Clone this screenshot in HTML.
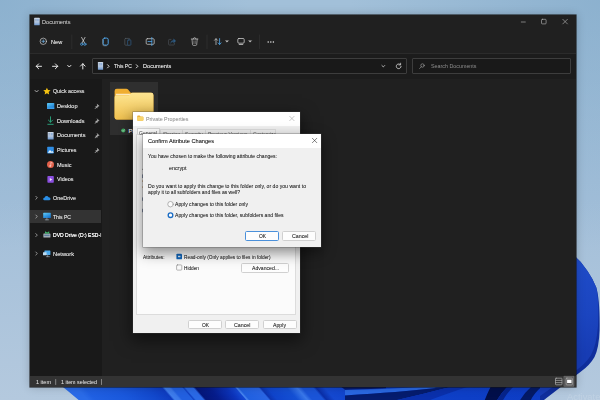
<!DOCTYPE html>
<html lang="en"><head><meta charset="utf-8"><title>Documents</title>
<style>
html,body{margin:0;padding:0;}
body{width:600px;height:400px;overflow:hidden;position:relative;font-family:"Liberation Sans",sans-serif;
background:#a9c4dc;}
.abs{position:absolute;}
.t{position:absolute;transform-origin:0 50%;text-shadow:0 0 .35px currentColor;white-space:nowrap;line-height:10px;height:10px;font-family:"Liberation Sans",sans-serif;}
#tx{position:absolute;left:0;top:0;width:600px;height:400px;will-change:transform;}
svg{position:absolute;left:0;top:0;overflow:visible;}
.win{position:absolute;left:29.6px;top:15.2px;width:546.2px;height:371.4px;background:#202020;box-shadow:0 0 0 .6px rgba(20,20,20,.85),0 0 9px rgba(0,0,0,.22);}
.btn{position:absolute;background:#fdfdfd;border:.5px solid #d0d0d0;border-radius:1.6px;box-sizing:border-box;}
#all{position:absolute;left:0;top:0;width:600px;height:400px;overflow:hidden;filter:blur(.32px);}

</style></head>
<body>
<div id="all">
<!-- wallpaper -->
<svg width="600" height="400" viewBox="0 0 600 400">
  <defs>
    <linearGradient id="wg" x1="0" y1="0" x2="0" y2="1">
      <stop offset="0" stop-color="#a2c0d9"/>
      <stop offset=".5" stop-color="#a3bfd9"/>
      <stop offset="1" stop-color="#b4c9de"/>
    </linearGradient>
    <radialGradient id="cnr" gradientUnits="userSpaceOnUse" cx="0" cy="0" r="250">
      <stop offset="0" stop-color="#73a0c3" stop-opacity=".46"/>
      <stop offset="1" stop-color="#73a0c3" stop-opacity="0"/>
    </radialGradient>
    <radialGradient id="cnr2" gradientUnits="userSpaceOnUse" cx="600" cy="0" r="250">
      <stop offset="0" stop-color="#73a0c3" stop-opacity=".46"/>
      <stop offset="1" stop-color="#73a0c3" stop-opacity="0"/>
    </radialGradient>
    <linearGradient id="bl1" gradientUnits="userSpaceOnUse" x1="60" y1="0" x2="560" y2="0" gradientTransform="translate(-340 0) skewX(41)">
      <stop offset="0" stop-color="#2a6be8"/>
      <stop offset=".04" stop-color="#2a6be8"/>
      <stop offset=".055" stop-color="#2060e2"/>
      <stop offset=".12" stop-color="#1a58dc"/>
      <stop offset=".18" stop-color="#1248cc"/>
      <stop offset=".21" stop-color="#0e3cc0"/>
      <stop offset=".215" stop-color="#3f7eec"/>
      <stop offset=".225" stop-color="#3a78ea"/>
      <stop offset=".23" stop-color="#2260e0"/>
      <stop offset=".25" stop-color="#2260e0"/>
      <stop offset=".253" stop-color="#1040c4"/>
      <stop offset=".257" stop-color="#2a6ae6"/>
      <stop offset=".272" stop-color="#2a68e6"/>
      <stop offset=".277" stop-color="#04167a"/>
      <stop offset=".304" stop-color="#061c8c"/>
      <stop offset=".34" stop-color="#0c34bc"/>
      <stop offset=".356" stop-color="#1448d4"/>
      <stop offset=".359" stop-color="#4a88f0"/>
      <stop offset=".364" stop-color="#2060e0"/>
      <stop offset=".403" stop-color="#2a66e4"/>
      <stop offset=".407" stop-color="#0c34b0"/>
      <stop offset=".42" stop-color="#0f44cc"/>
      <stop offset=".46" stop-color="#1450d4"/>
      <stop offset=".48" stop-color="#3a78ea"/>
      <stop offset=".49" stop-color="#1a54d8"/>
      <stop offset=".512" stop-color="#1a54d8"/>
      <stop offset=".518" stop-color="#0a2ea8"/>
      <stop offset=".535" stop-color="#1448d0"/>
      <stop offset=".6" stop-color="#0f42ca"/>
      <stop offset="1" stop-color="#0d3cc4"/>
    </linearGradient>
    <linearGradient id="bl2" gradientUnits="userSpaceOnUse" x1="574" y1="260" x2="600" y2="350">
      <stop offset="0" stop-color="#1f4cc8"/>
      <stop offset=".6" stop-color="#1b45c0"/>
      <stop offset="1" stop-color="#173cb4"/>
    </linearGradient>
  </defs>
  <rect width="600" height="400" fill="url(#wg)"/>
  <rect x="0" y="0" width="300" height="260" fill="url(#cnr)"/>
  <rect x="300" y="0" width="300" height="260" fill="url(#cnr2)"/>
  <!-- bloom bottom -->
  <path d="M58 383 Q68 391 81 402 L542 402 Q549 393 561 383 Z" fill="url(#bl1)"/>
  <path d="M340 386 L386 386 L386 388.2 Q365 389.600 345 389.800Z" fill="#05196a"/>
  <path d="M345 390 Q390 389.500 432 386 L436 388 Q400 392 345 395.500Z" fill="#2a68e2"/>
  <path d="M345 395.500 Q400 392 436 388 L452 386.500 Q420 395 388 402 L345 402Z" fill="#051c6e"/>
  <path d="M388 402 Q420 395 452 386.500 L470 386 Q440 396 425 402Z" fill="#0a30ac"/>
  <path d="M491 386 L508 386 Q500 394 496 402 L484 402 Q487 394 491 386Z" fill="#020f4a"/>
  <path d="M508 386 L514 386 Q506 394 502 402 L496 402 Q500 394 508 386Z" fill="#06248c"/>
  <path d="M532 386 L542.500 386 Q533 394 530 402 L519 402 Q524 393 532 386Z" fill="#041a66"/>
  <!-- bloom right -->
  <path d="M572 253.500 Q581 261 587.500 271 Q593 279 596.300 287.500 Q600 300 599.600 330 Q599 348 594.500 357 Q590 365 581 371.500 L540 403 L540 250 Z" fill="#0f2e9c"/>
  <path d="M572 253.500 Q581 261 587.500 271 Q593 279 596.300 287.500 Q599.200 300 598 326 Q596.500 345 591 355 Q586 363 578 369 L540 396 L540 250 Z" fill="url(#bl2)"/>
</svg>

<!-- explorer window -->
<div class="win">
  <div class="abs" style="left:0;top:38.3px;width:546.2px;height:.6px;background:#2b2b2b"></div>
  <div class="abs" style="left:0;top:38.9px;width:546.2px;height:25.4px;background:#1c1c1c"></div>
  <div class="abs" style="left:0;top:64.3px;width:72.4px;height:296.8px;background:#191919"></div>
  <div class="abs" style="left:0;top:361.1px;width:546.2px;height:10.6px;background:#333333"></div>
  <!-- address box -->
  <div class="abs" style="left:62.4px;top:43px;width:315px;height:16.2px;background:#191919;border:.6px solid #3d3d3d;box-sizing:border-box;border-radius:1px"></div>
  <div class="abs" style="left:382.4px;top:43px;width:158.8px;height:16.2px;background:#191919;border:.6px solid #3d3d3d;box-sizing:border-box;border-radius:1px"></div>
  <!-- this pc highlight -->
  <div class="abs" style="left:0;top:195.200px;width:71.500px;height:12.600px;background:#333333"></div>
  <!-- selected tile -->
  <div class="abs" style="left:80.4px;top:67px;width:48px;height:53px;background:#2f2f2f"></div>
</div>

<!-- explorer icons -->
<svg width="600" height="400" viewBox="0 0 600 400" fill="none" stroke-linecap="round" stroke-linejoin="round">
  <defs>
    <linearGradient id="fold" x1="0" y1="0" x2="0" y2="1">
      <stop offset="0" stop-color="#fde592"/>
      <stop offset="1" stop-color="#f2c350"/>
    </linearGradient>
    <linearGradient id="dsk" x1="0" y1="0" x2=".6" y2="1"><stop offset="0" stop-color="#62cdf7"/><stop offset="1" stop-color="#1676d0"/></linearGradient>
    <linearGradient id="docg" x1="0" y1="0" x2="0" y2="1">
      <stop offset="0" stop-color="#cfdae8"/>
      <stop offset=".55" stop-color="#b4c6de"/>
      <stop offset="1" stop-color="#6c98d0"/>
    </linearGradient>
  </defs>
  <!-- title icon -->
  <rect x="34.2" y="17.8" width="5.5" height="7.5" rx=".5" fill="url(#docg)"/><path d="M35.30 19.40h1.200M35.30 20.70h1.200" stroke="#7d95b4" stroke-width=".6"/><rect x="37.10" y="18.90" width="1.700" height="2.300" fill="#8fb0da" stroke="none"/>
  <!-- window controls -->
  <path d="M521.3 22 h4" stroke="#bdbdbd" stroke-width=".6"/>
  <rect x="541.5" y="19.3" width="4.6" height="4.6" rx=".8" stroke="#bdbdbd" stroke-width=".6"/>
  <path d="M562.8 19.3 l4.6 4.6 M567.4 19.3 l-4.6 4.6" stroke="#bdbdbd" stroke-width=".6"/>

  <!-- New -->
  <circle cx="43.3" cy="41.3" r="3.2" stroke="#d8d8d8" stroke-width=".65"/>
  <path d="M41.9 41.3h2.8M43.3 39.9v2.8" stroke="#74b8ee" stroke-width=".7"/>
  <path d="M71.8 35v13.6" stroke="#3a3a3a" stroke-width=".5"/>
  <!-- cut -->
  <path d="M81.6 37.4 L84.6 43 M85 37.4 L82 43" stroke="#e6e6e6" stroke-width=".7"/>
  <circle cx="81.7" cy="44.2" r="1.15" stroke="#4ea3e6" stroke-width=".75"/>
  <circle cx="84.9" cy="44.2" r="1.15" stroke="#4ea3e6" stroke-width=".75"/>
  <!-- copy -->
  <rect x="103.2" y="38.1" width="5" height="7" rx="1.5" stroke="#4ea3e6" stroke-width="1"/>
  <path d="M102.6 39.2v5.2q0 1.4 1.4 1.4h2.4" stroke="#d0e4f5" stroke-width=".45" opacity=".7"/>
  <!-- paste dim -->
  <rect x="124.8" y="38.4" width="5" height="6.8" rx=".9" stroke="#525a62" stroke-width=".7"/>
  <rect x="127.6" y="40" width="3.3" height="5.2" rx=".6" stroke="#2f5d86" stroke-width=".7" fill="#202020"/>
  <!-- rename -->
  <rect x="146.2" y="38.7" width="8" height="5.6" rx="1.1" stroke="#d4d4d4" stroke-width=".7"/>
  <path d="M151.8 37.4v8.2" stroke="#4ea3e6" stroke-width=".8"/>
  <path d="M148 41.5h3.8" stroke="#4ea3e6" stroke-width=".8"/>
  <!-- share dim -->
  <path d="M171 39.4h-1.6q-.8 0-.8.8v4q0 .8.8.8h4.2q.8 0 .8-.8v-1" stroke="#4a5058" stroke-width=".7"/>
  <path d="M170.6 43q.4-2.6 3-2.8v-1.4l2.2 2.1-2.2 2.1v-1.4q-1.800-.1-3 1.400z" fill="#2f5d86" stroke="#2f5d86" stroke-width=".3"/>
  <!-- delete -->
  <path d="M191.3 39h6.600M193.300 39q0-1.400 1.300-1.400t1.300 1.400" stroke="#cfcfcf" stroke-width=".65"/>
  <path d="M192 39.200l.5 5.300q.1.900 1 .9h2.200q.9 0 1-.9l.5-5.300" stroke="#cfcfcf" stroke-width=".65"/>
  <path d="M193.900 40.800v2.800M195.300 40.800v2.800" stroke="#a8a8a8" stroke-width=".5"/>
  <path d="M207 35v13.600" stroke="#3a3a3a" stroke-width=".5"/>
  <!-- sort -->
  <path d="M216 44.6v-5.8M214.500 40.300l1.500-1.600 1.500 1.600" stroke="#c8c8c8" stroke-width=".75"/>
  <path d="M219.600 38.600v5.800M218.100 42.900l1.500 1.600 1.500-1.600" stroke="#4ea3e6" stroke-width=".85"/>
  <path d="M225.600 40.800l1.400 1.400 1.400-1.400z" fill="#d0d0d0" stroke="#d0d0d0" stroke-width=".3"/>
  <!-- view -->
  <rect x="237.800" y="38.500" width="6.400" height="4.700" rx="1.100" stroke="#d4d4d4" stroke-width=".75"/>
  <path d="M239.200 44.500h3.600" stroke="#d4d4d4" stroke-width=".75"/>
  <path d="M248.700 40.800l1.400 1.400 1.400-1.400z" fill="#d0d0d0" stroke="#d0d0d0" stroke-width=".3"/>
  <path d="M259.600 35v13.600" stroke="#3a3a3a" stroke-width=".5"/>
  <!-- more -->
  <g fill="#e8e8e8"><circle cx="268.200" cy="42" r=".75"/><circle cx="270.800" cy="42" r=".75"/><circle cx="273.400" cy="42" r=".75"/></g>

  <!-- nav arrows -->
  <g stroke="#f2f2f2" stroke-width=".95">
    <path d="M36.300 66.300h5.200M38.600 63.900l-2.400 2.400 2.400 2.400"/>
    <path d="M52.500 66.300h5.200M55.400 63.900l2.400 2.400-2.400 2.400"/>
    <path d="M67.700 65.400l1.600 1.600 1.600-1.600"/>
    <path d="M82.800 69v-5.200M80.500 66.100l2.300-2.400 2.300 2.400"/>
  </g>
  <!-- address icon -->
  <rect x="97.9" y="61.9" width="5.2" height="7.9" rx=".5" fill="url(#docg)"/><path d="M99.00 63.50h1.200M99.00 64.80h1.200" stroke="#7d95b4" stroke-width=".6"/><rect x="100.50" y="63.00" width="1.700" height="2.300" fill="#8fb0da" stroke="none"/>
  <path d="M107.5 64.7l1.6 1.6-1.6 1.6M136.3 64.7l1.6 1.6-1.6 1.6" stroke="#eaeaea" stroke-width=".9"/>
  <path d="M381.900 65.500l1.400 1.400 1.400-1.400" stroke="#e0e0e0" stroke-width=".75"/>
  <path d="M401.100 66.300a2.400 2.400 0 1 1-.9-1.900" stroke="#e0e0e0" stroke-width=".75"/>
  <path d="M400.600 63.200v1.700h-1.700" stroke="#e0e0e0" stroke-width=".7"/>
  <!-- search icon -->
  <circle cx="422.500" cy="65.500" r="1.700" stroke="#a8a8a8" stroke-width=".6"/>
  <path d="M421.300 66.800l-1.700 1.700" stroke="#a8a8a8" stroke-width=".6"/>

  <!-- sidebar -->
  <path d="M35 90.400l1.600 1.600 1.600-1.600" stroke="#cfcfcf" stroke-width=".8"/>
  <path d="M46.900 87.700l1.100 2.350 2.550.25-1.900 1.750.5 2.500-2.250-1.300-2.250 1.300.5-2.500-1.900-1.750 2.550-.25z" fill="#f5c211" stroke="none"/>
  <!-- desktop -->
  <rect x="47" y="103" width="7.300" height="5.900" rx=".6" fill="url(#dsk)"/>
  <path d="M47 107.600h7.300v.8q0 .5-.5.500h-6.300q-.5 0-.5-.5z" fill="#3d9be6" stroke="none"/>
  <!-- downloads -->
  <path d="M50.500 116.800v5.200M48.400 120.100l2.100 2.100 2.100-2.100" stroke="#2bb386" stroke-width=".85"/>
  <path d="M47.800 124.300h5.400" stroke="#2bb386" stroke-width=".85"/>
  <!-- documents -->
  <rect x="47.7" y="131.9" width="5.9" height="7.6" rx=".5" fill="url(#docg)"/><path d="M48.80 133.50h1.200M48.80 134.80h1.200" stroke="#7d95b4" stroke-width=".6"/><rect x="51.00" y="133.00" width="1.700" height="2.300" fill="#8fb0da" stroke="none"/>
  <!-- pictures -->
  <rect x="47.200" y="146.800" width="6.600" height="6.600" rx=".7" fill="#2f8de4"/>
  <path d="M47.700 152.800l2.300-2.900 1.700 1.800.8-.8 1.200 1.900z" fill="#e8f3fc" stroke="none"/>
  <!-- music -->
  <circle cx="50.500" cy="164.500" r="3.500" fill="#e2604a"/>
  <path d="M50.800 166v-3.600l1.400.5" stroke="#fde6e0" stroke-width=".6"/>
  <circle cx="50.100" cy="166" r=".8" fill="#fde6e0"/>
  <!-- videos -->
  <rect x="47.400" y="176" width="6.400" height="6.800" rx=".8" fill="#8b4fe0"/>
  <path d="M49.800 177.900l2.500 1.500-2.500 1.500z" fill="#efe5fd" stroke="none"/>
  <!-- pins -->
  <g fill="#b4b4b4" stroke="#b4b4b4" stroke-width=".35">
    <path d="M97.300 104.200l1.900 1.900-1 .2-.9.900-.2 1-.7-.7-1.300 1.300-.2-.2 1.300-1.300-.7-.7 1-.2.900-.9z"/>
    <path d="M97.300 118.900l1.900 1.900-1 .2-.9.900-.2 1-.7-.7-1.300 1.300-.2-.2 1.300-1.300-.7-.7 1-.2.900-.9z"/>
    <path d="M97.300 133.600l1.900 1.900-1 .2-.9.900-.2 1-.7-.7-1.300 1.300-.2-.2 1.300-1.300-.7-.7 1-.2.900-.9z"/>
    <path d="M97.300 148.300l1.900 1.900-1 .2-.9.900-.2 1-.7-.7-1.300 1.300-.2-.2 1.300-1.300-.7-.7 1-.2.900-.9z"/>
  </g>
  <!-- chevrons -->
  <g stroke="#b8b8b8" stroke-width=".75">
    <path d="M35.800 196.300l1.500 1.500-1.500 1.500"/>
    <path d="M35.800 215l1.500 1.500-1.500 1.500"/>
    <path d="M35.800 233.600l1.500 1.500-1.500 1.500"/>
    <path d="M35.800 252l1.500 1.500-1.500 1.500"/>
  </g>
  <!-- onedrive cloud -->
  <path d="M44.600 200.300q-1.400 0-1.400-1.300 0-1.200 1.300-1.300.3-1.700 2.100-1.700 1.400 0 2 1.200 1.800-.1 1.900 1.500 0 1.600-1.500 1.600z" fill="#2a8ee6"/>
  <!-- this pc -->
  <rect x="43.200" y="212.700" width="7.600" height="5.400" rx=".6" fill="url(#dsk)"/>

  <path d="M45.300 219.800h3.200M46.900 218v1.800" stroke="#9aa7b2" stroke-width=".7"/>
  <!-- dvd -->
  <rect x="43.400" y="233.600" width="7" height="4" rx=".5" fill="#aeb6bd"/>
  <path d="M45 231.300l2.200 1.200 2-1.300v2.400h-4.200z" fill="#3fb56a" stroke="none"/>
  <rect x="44.200" y="234.600" width="5.400" height="1.600" fill="#5d7f9e" stroke="none"/>
  <!-- network -->
  <rect x="44.400" y="250.600" width="6" height="4.300" rx=".4" fill="#4aa9ec"/>
  <rect x="43" y="252.200" width="3.600" height="3" rx=".3" fill="#bcd9ee"/>
  <path d="M46.300 256.700h3.200M47.700 254.900v1.800" stroke="#aab4bd" stroke-width=".6"/>

  <!-- folder icon -->
  <path d="M114.600 91q0-2.200 2.200-2.200h9.400q1.300 0 2.100 1l2.300 2.900h20.600q2.200 0 2.200 2.200v22.400q0 2.200-2.200 2.200h-34.400q-2.200 0-2.200-2.200z" fill="#f0ae30" stroke="none"/>
  <path d="M116.200 94.300h13.600" stroke="#fff8e4" stroke-width="1"/>
  <path d="M114.600 97.200q0-1.900 1.900-1.900h11.300q1.200 0 2-.9l.9-1q.7-.7 1.800-.7h18.700q2.200 0 2.200 2.200v22.400q0 2.200-2.200 2.200h-34.400q-2.200 0-2.200-2.200z" fill="url(#fold)" stroke="none"/>
  <circle cx="123.300" cy="130.500" r="2.100" fill="#3fae62" stroke="none"/>
  <path d="M122.300 130.600l.8.800 1.300-1.600" stroke="#eaf8ee" stroke-width=".5"/>
  <!-- status icons -->
  <rect x="555.500" y="378.200" width="6.500" height="6.600" rx=".6" stroke="#c4c4c4" stroke-width=".6"/>
  <path d="M555.800 380.400h6M555.800 382.600h6" stroke="#c4c4c4" stroke-width=".6"/>
  <rect x="564.300" y="376.300" width="9.600" height="10" fill="#5c5c5c" stroke="#858585" stroke-width=".5"/>
  <rect x="566.100" y="378.100" width="6.300" height="6.800" rx=".8" stroke="#c0c0c0" stroke-width=".55"/>
  <rect x="567.100" y="379.700" width="4.400" height="3.300" fill="#ffffff" stroke="none"/>
  <!-- status separators -->
  <path d="M55.700 379.500v5M101.500 379.500v5" stroke="#d8d8d8" stroke-width=".5"/>
</svg>
<span class="t" style="left:128.500px;top:125.500px;color:#f0f0f0;font-size:6.100px">Private</span>

<!-- Properties dialog -->
<div class="abs" style="left:132.800px;top:112px;width:166.900px;height:220.700px;background:#f0f0f0;box-shadow:0 0 0 .5px rgba(70,70,70,.55),0 6px 15px 2px rgba(0,0,0,.5)">
  <div class="abs" style="left:0;top:0;width:100%;height:13.500px;background:#fff"></div>
  <!-- tab page -->
  <div class="abs" style="left:3.400px;top:21.600px;width:159.600px;height:181.500px;background:#fbfbfb;border:.5px solid #dcdcdc;box-sizing:border-box"></div>
  <!-- tabs -->
  <div class="abs" style="left:27px;top:16.6px;width:116.4px;height:5.6px;background:#f0f0f0;border:.5px solid #dcdcdc;border-bottom:none;box-sizing:border-box"></div>
  <div class="abs" style="left:49.6px;top:16.6px;width:.5px;height:5.4px;background:#dcdcdc"></div>
  <div class="abs" style="left:72.6px;top:16.6px;width:.5px;height:5.4px;background:#dcdcdc"></div>
  <div class="abs" style="left:117.1px;top:16.6px;width:.5px;height:5.4px;background:#dcdcdc"></div>
  <div class="abs" style="left:4.2px;top:15.6px;width:23px;height:6.6px;background:#fcfcfc;border:.5px solid #d4d4d4;border-bottom:none;box-sizing:border-box"></div>
  <div class="abs" style="left:0;top:0;width:166px;height:30px;will-change:transform">
  <span class="t" style="left:6.3px;top:15.6px;color:#3a3a3a;font-size:5.7px;transform:scaleX(.88);text-shadow:none">General</span>
  <span class="t" style="left:29.6px;top:16.9px;color:#555;font-size:5.6px;transform:scaleX(.88);text-shadow:none">Sharing</span>
  <span class="t" style="left:52.2px;top:16.9px;color:#555;font-size:5.6px;transform:scaleX(.88);text-shadow:none">Security</span>
  <span class="t" style="left:75.4px;top:16.9px;color:#555;font-size:5.6px;transform:scaleX(.88);text-shadow:none">Previous Versions</span>
  <span class="t" style="left:119.8px;top:16.9px;color:#555;font-size:5.6px;transform:scaleX(.88);text-shadow:none">Customize</span>
  </div>
  <div class="btn" style="left:108.400px;top:151px;width:47.600px;height:9.600px"></div>
  <div class="btn" style="left:54.900px;top:208px;width:34px;height:9.400px"></div>
  <div class="btn" style="left:92.200px;top:208px;width:34px;height:9.400px"></div>
  <div class="btn" style="left:129.900px;top:208px;width:34px;height:9.400px"></div>
</div>
<svg width="600" height="400" viewBox="0 0 600 400" fill="none" stroke-linecap="round" stroke-linejoin="round">
  <path d="M137.200 116.300q0-.8.800-.8h1.700l.9 1h2q.8 0 .8.800v2.700q0 .8-.8.800h-4.600q-.8 0-.8-.8z" fill="#eeb33a"/><path d="M137.200 117.600q0-.6.600-.6h5q.6 0 .6.600v2.400q0 .8-.8.800h-4.600q-.8 0-.8-.8z" fill="#f8d56e"/>
  <path d="M289.700 116.300l4.400 4.400M294.100 116.300l-4.400 4.400" stroke="#a4a4a4" stroke-width=".6"/>
  <g stroke="none">
    <rect x="142.2" y="168.8" width="1" height="1.2" fill="#8a8a8a"/>
    <rect x="142.2" y="174.4" width="1.1" height="3.6" fill="#5a6a8a"/>
    <rect x="142.2" y="180.4" width="1" height="1.4" fill="#c89a6a"/>
    <rect x="142.2" y="186.4" width="1" height="1.4" fill="#c89a6a"/>
    <rect x="142.2" y="197.4" width="1.1" height="3.4" fill="#5a6a8a"/>
    <rect x="142.2" y="208.8" width="1.1" height="3.4" fill="#5a6a8a"/>
  </g>
  <rect x="176.400" y="253.700" width="5.600" height="5.600" rx=".9" fill="#1166bb"/>
  <rect x="178" y="255.800" width="2.400" height="1.400" fill="#dfeaf6"/>
  <rect x="176.600" y="264.900" width="5.200" height="5.200" rx=".8" fill="#fafafa" stroke="#6e6e6e" stroke-width=".5"/>
</svg>

<!-- Confirm dialog -->
<div class="abs" style="left:143.300px;top:134.400px;width:177.500px;height:112.600px;background:#f0f0f0;box-shadow:0 0 0 .5px rgba(70,70,70,.55),0 5px 13px 1px rgba(0,0,0,.45)">
  <div class="abs" style="left:0;top:0;width:100%;height:13.200px;background:#fff"></div>
  <div class="btn" style="left:101.700px;top:96.900px;width:33.800px;height:9.300px;border:.7px solid #4a90da"></div>
  <div class="btn" style="left:139.200px;top:96.900px;width:33.800px;height:9.300px"></div>
</div>
<svg width="600" height="400" viewBox="0 0 600 400" fill="none" stroke-linecap="round" stroke-linejoin="round">
  <path d="M312.400 138.300l4.400 4.400M316.800 138.300l-4.400 4.400" stroke="#333" stroke-width=".6"/>
  <circle cx="170.5" cy="204.2" r="2.75" fill="#fbfbfb" stroke="#7a7a7a" stroke-width=".55"/>
  <circle cx="170.5" cy="215.2" r="2.3" fill="#fff" stroke="#1a6cc4" stroke-width="1.35"/>
</svg>
<div id="tx">
<span class="t" style="left:42px;top:17.00px;color:#c0c0c0;font-size:6.1px;font-weight:400;transform:scaleX(0.9245);text-shadow:0 0 .3px rgba(190,190,190,.5);">Documents</span>
<span class="t" style="left:51.25px;top:36.60px;color:#e6e6e6;font-size:6.1px;font-weight:400;transform:scaleX(0.9219);text-shadow:0 0 .3px rgba(230,230,230,.6);">New</span>
<span class="t" style="left:114px;top:61.20px;color:#e6e6e6;font-size:6.1px;font-weight:400;transform:scaleX(0.8190);text-shadow:0 0 .3px rgba(230,230,230,.6);">This PC</span>
<span class="t" style="left:142.5px;top:61.20px;color:#e6e6e6;font-size:6.1px;font-weight:400;transform:scaleX(0.9164);text-shadow:0 0 .3px rgba(230,230,230,.6);">Documents</span>
<span class="t" style="left:431.25px;top:61.20px;color:#8e8e8e;font-size:5.8px;font-weight:400;transform:scaleX(0.9230);text-shadow:none;">Search Documents</span>
<span class="t" style="left:52.75px;top:86.20px;color:#e6e6e6;font-size:6.1px;font-weight:400;transform:scaleX(0.8690);text-shadow:0 0 .3px rgba(230,230,230,.6);">Quick access</span>
<span class="t" style="left:56.6px;top:101.00px;color:#e6e6e6;font-size:6.1px;font-weight:400;transform:scaleX(0.9168);text-shadow:0 0 .3px rgba(230,230,230,.6);">Desktop</span>
<span class="t" style="left:56.6px;top:115.70px;color:#e6e6e6;font-size:6.1px;font-weight:400;transform:scaleX(0.9119);text-shadow:0 0 .3px rgba(230,230,230,.6);">Downloads</span>
<span class="t" style="left:56.6px;top:130.40px;color:#e6e6e6;font-size:6.1px;font-weight:400;transform:scaleX(0.9245);text-shadow:0 0 .3px rgba(230,230,230,.6);">Documents</span>
<span class="t" style="left:56.6px;top:145.10px;color:#e6e6e6;font-size:6.1px;font-weight:400;transform:scaleX(0.8857);text-shadow:0 0 .3px rgba(230,230,230,.6);">Pictures</span>
<span class="t" style="left:56.6px;top:159.60px;color:#e6e6e6;font-size:6.1px;font-weight:400;transform:scaleX(0.9107);text-shadow:0 0 .3px rgba(230,230,230,.6);">Music</span>
<span class="t" style="left:56.6px;top:174.40px;color:#e6e6e6;font-size:6.1px;font-weight:400;transform:scaleX(0.8904);text-shadow:0 0 .3px rgba(230,230,230,.6);">Videos</span>
<span class="t" style="left:52.75px;top:193.00px;color:#e6e6e6;font-size:6.1px;font-weight:400;transform:scaleX(0.8932);text-shadow:0 0 .3px rgba(230,230,230,.6);">OneDrive</span>
<span class="t" style="left:52.75px;top:211.60px;color:#e6e6e6;font-size:6.1px;font-weight:400;transform:scaleX(0.8306);text-shadow:0 0 .3px rgba(230,230,230,.6);">This PC</span>
<span class="t" style="left:52.75px;top:230.20px;color:#ffffff;font-size:6.1px;font-weight:400;overflow:hidden;width:58.3px;transform:scaleX(.83);">DVD Drive (D:) ESD-I</span>
<span class="t" style="left:52.75px;top:248.60px;color:#e6e6e6;font-size:6.1px;font-weight:400;transform:scaleX(0.9392);text-shadow:0 0 .3px rgba(230,230,230,.6);">Network</span>
<span class="t" style="left:36px;top:377.00px;color:#d4d4d4;font-size:5.6px;font-weight:400;transform:scaleX(0.9846);text-shadow:0 0 .3px rgba(210,210,210,.5);">1 item</span>
<span class="t" style="left:61px;top:377.00px;color:#d4d4d4;font-size:5.6px;font-weight:400;transform:scaleX(0.9568);text-shadow:0 0 .3px rgba(210,210,210,.5);">1 item selected</span>
<span class="t" style="left:146.3px;top:113.50px;color:#9a9a9a;font-size:5.9px;font-weight:400;transform:scaleX(0.9076);text-shadow:0 0 .3px rgba(120,120,120,.4);">Private Properties</span>
<span class="t" style="left:142.5px;top:251.60px;color:#262626;font-size:5.5px;font-weight:400;transform:scaleX(0.8681);text-shadow:0 0 .3px rgba(0,0,0,.35);">Attributes:</span>
<span class="t" style="left:184px;top:251.60px;color:#262626;font-size:5.5px;font-weight:400;transform:scaleX(0.8733);text-shadow:0 0 .3px rgba(0,0,0,.35);">Read-only (Only applies to files in folder)</span>
<span class="t" style="left:184px;top:262.60px;color:#262626;font-size:5.5px;font-weight:400;transform:scaleX(0.8602);text-shadow:0 0 .3px rgba(0,0,0,.35);">Hidden</span>
<span class="t" style="left:251.5px;top:262.80px;color:#262626;font-size:5.6px;font-weight:400;transform:scaleX(0.9138);text-shadow:0 0 .3px rgba(0,0,0,.35);">Advanced...</span>
<span class="t" style="left:201.5px;top:319.80px;color:#262626;font-size:5.6px;font-weight:400;transform:scaleX(0.8649);text-shadow:0 0 .3px rgba(0,0,0,.35);">OK</span>
<span class="t" style="left:233.5px;top:319.80px;color:#262626;font-size:5.6px;font-weight:400;transform:scaleX(0.9471);text-shadow:0 0 .3px rgba(0,0,0,.35);">Cancel</span>
<span class="t" style="left:272.8px;top:319.80px;color:#262626;font-size:5.6px;font-weight:400;transform:scaleX(0.9286);text-shadow:0 0 .3px rgba(0,0,0,.35);">Apply</span>
<span class="t" style="left:147.5px;top:135.60px;color:#111;font-size:5.9px;font-weight:400;transform:scaleX(0.9552);text-shadow:0 0 .3px rgba(0,0,0,.35);">Confirm Attribute Changes</span>
<span class="t" style="left:148px;top:150.70px;color:#262626;font-size:5.5px;font-weight:400;transform:scaleX(0.9185);text-shadow:0 0 .3px rgba(0,0,0,.35);">You have chosen to make the following attribute changes:</span>
<span class="t" style="left:168.5px;top:163.00px;color:#262626;font-size:5.5px;font-weight:400;transform:scaleX(0.9697);text-shadow:0 0 .3px rgba(0,0,0,.35);">encrypt</span>
<span class="t" style="left:148px;top:181.00px;color:#262626;font-size:5.5px;font-weight:400;transform:scaleX(0.9350);text-shadow:0 0 .3px rgba(0,0,0,.35);">Do you want to apply this change to this folder only, or do you want to</span>
<span class="t" style="left:148px;top:187.30px;color:#262626;font-size:5.5px;font-weight:400;transform:scaleX(0.9119);text-shadow:0 0 .3px rgba(0,0,0,.35);">apply it to all subfolders and files as well?</span>
<span class="t" style="left:175px;top:199.20px;color:#262626;font-size:5.5px;font-weight:400;transform:scaleX(0.9219);text-shadow:0 0 .3px rgba(0,0,0,.35);">Apply changes to this folder only</span>
<span class="t" style="left:175px;top:210.20px;color:#262626;font-size:5.5px;font-weight:400;transform:scaleX(0.9217);text-shadow:0 0 .3px rgba(0,0,0,.35);">Apply changes to this folder, subfolders and files</span>
<span class="t" style="left:258.5px;top:231.00px;color:#262626;font-size:5.6px;font-weight:400;transform:scaleX(0.8649);text-shadow:0 0 .3px rgba(0,0,0,.35);">OK</span>
<span class="t" style="left:291.5px;top:231.00px;color:#262626;font-size:5.6px;font-weight:400;transform:scaleX(0.9471);text-shadow:0 0 .3px rgba(0,0,0,.35);">Cancel</span>
<span class="t" style="left:567px;top:392.30px;color:rgba(225,233,241,.27);font-size:9.4px;font-weight:400;text-shadow:none;">Activate</span>
</div>

</div>
</body></html>
